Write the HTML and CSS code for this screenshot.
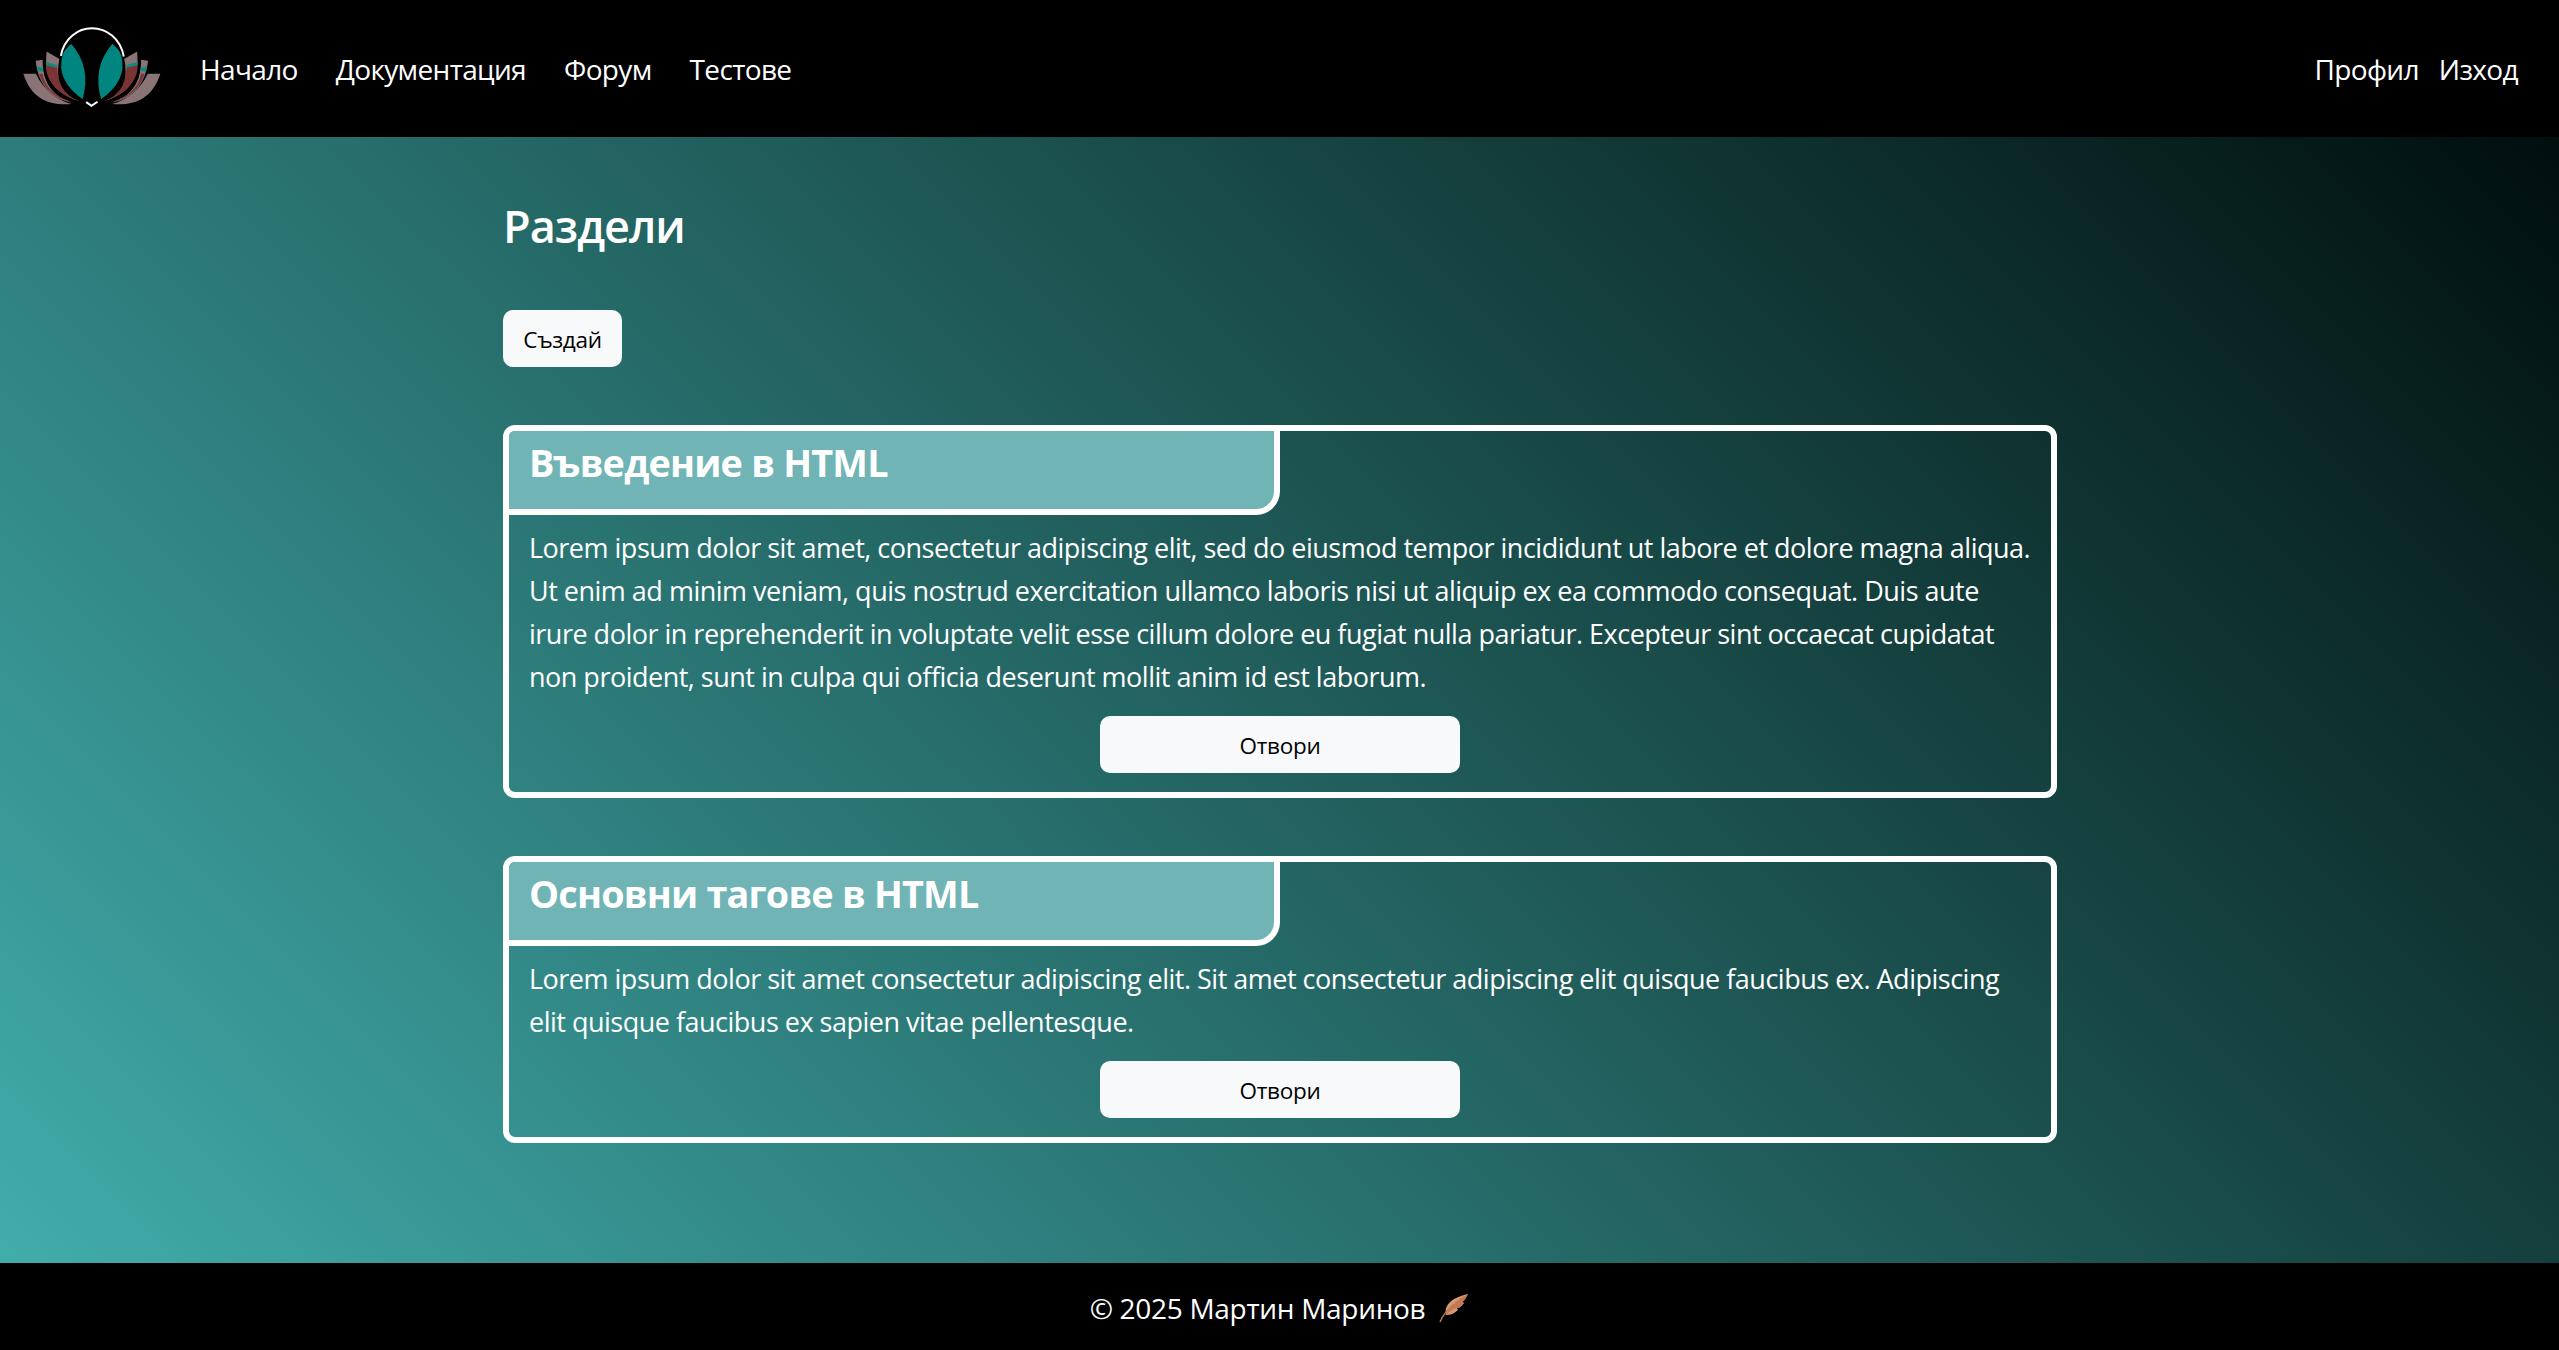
FILE: index.html
```html
<!DOCTYPE html>
<html lang="bg">
<head>
<meta charset="utf-8">
<title>Раздели</title>
<link rel="stylesheet" href="styles.css">
</head>
<body>
<nav class="navbar">
  <svg class="logo" viewBox="60 70 430 260" aria-hidden="true">
    <defs>
      <g id="half">
        <path class="petal-grey" d="M70 222 L108 222 C130 270 170 300 215 313 C150 318 95 300 70 222Z"/>
        <path class="petal-grey" d="M107 183 L128 180 C128 250 160 290 215 308 C160 300 115 260 107 183Z"/>
        <path class="petal-red" d="M128 222 C135 265 170 295 225 308 C165 300 128 262 118 222Z"/>
        <path class="petal-teal" d="M110 200 L130 204 L130 214 L113 214Z"/>
        <path class="petal-grey" d="M140 155 L180 178 C170 240 190 280 240 304 C170 285 130 240 140 155Z"/>
        <path class="petal-teal" d="M138 186 L172 196 L172 204 L138 196Z"/>
        <path class="petal-red" d="M138 196 L172 204 C172 245 195 280 240 304 C175 285 138 245 138 196Z"/>
        <path class="petal-line" d="M183 170 C165 240 185 285 250 306"/>
        <path class="petal-line" d="M133 190 C130 250 165 295 238 309"/>
        <path class="petal-red" d="M183 185 L197 210 L186 205Z"/>
        <path class="petal-red" d="M184 215 C205 240 225 265 240 292 C215 270 195 250 184 215Z"/>
        <path class="leaf" d="M215 128 C252 170 272 230 250 303 C205 272 168 225 185 165 C190 150 202 138 215 128Z"/>
      </g>
    </defs>
    <use href="#half"/>
    <use href="#half" transform="matrix(-1 0 0 1 552 0)"/>
    <path class="halo" d="M183 168 C192 115 235 85 276 85 C320 85 362 115 372 170"/>
    <path class="chevron" d="M259 307 L275 318 L293 306"/>
  </svg>
  <ul class="nav-links">
    <li>Начало</li>
    <li>Документация</li>
    <li>Форум</li>
    <li>Тестове</li>
  </ul>
  <ul class="nav-links nav-right">
    <li>Профил</li>
    <li>Изход</li>
  </ul>
</nav>
<main class="content">
  <div class="container">
    <h1 class="page-title">Раздели</h1>
    <button class="btn btn-create">Създай</button>
    <section class="card">
      <h2 class="card-tab">Въведение в HTML</h2>
      <div class="card-body">
        <p class="card-text">Lorem ipsum dolor sit amet, consectetur adipiscing elit, sed do eiusmod tempor incididunt ut labore et dolore magna aliqua. Ut enim ad minim veniam, quis nostrud exercitation ullamco laboris nisi ut aliquip ex ea commodo consequat. Duis aute irure dolor in reprehenderit in voluptate velit esse cillum dolore eu fugiat nulla pariatur. Excepteur sint occaecat cupidatat non proident, sunt in culpa qui officia deserunt mollit anim id est laborum.</p>
        <button class="btn btn-open">Отвори</button>
      </div>
    </section>
    <section class="card">
      <h2 class="card-tab">Основни тагове в HTML</h2>
      <div class="card-body">
        <p class="card-text">Lorem ipsum dolor sit amet consectetur adipiscing elit. Sit amet consectetur adipiscing elit quisque faucibus ex. Adipiscing elit quisque faucibus ex sapien vitae pellentesque.</p>
        <button class="btn btn-open">Отвори</button>
      </div>
    </section>
  </div>
</main>
<footer class="footer">
  <span>© 2025 Мартин Маринов</span>
  <svg class="feather" viewBox="0 0 30 30" aria-hidden="true">
    <path class="feather-vane" d="M7 22 C5 13 11 5 29 1 C27 5 25 8 23 9 L25 10 C22 14 20 15 18 15 L19 17 C16 20 12 22 7 22Z"/>
    <path class="feather-shade" d="M7 22 C10 14 16 8 29 1 C27 5 25 8 23 9 L25 10 C22 14 20 15 18 15 C14 16 10 19 7 22Z"/>
    <path class="feather-quill" d="M1 29 C3 24 6 19 14 12"/>
  </svg>
</footer>
</body>
</html>
```

FILE: styles.css
```css
* {
  box-sizing: border-box;
}

html,
body {
  margin: 0;
  height: 100%;
}

body {
  display: flex;
  flex-direction: column;
  min-height: 100vh;
  background: #000;
  color: #fff;
  font-family: "Open Sans", "Noto Sans", sans-serif;
}

.navbar {
  display: flex;
  align-items: center;
  height: 137px;
  flex: none;
  padding: 0 41px 0 20px;
  background: #000;
}

.logo {
  width: 143px;
  height: 87px;
  flex: none;
  margin-bottom: 5px;
}

.petal-grey { fill: #8a7475; }
.petal-red { fill: #7a3434; }
.petal-teal { fill: #0c8a84; }
.petal-line { fill: none; stroke: #000; stroke-width: 5; }
.leaf { fill: #008580; stroke: #000; stroke-width: 6; }
.halo { fill: none; stroke: #fff; stroke-width: 6; }
.chevron { fill: none; stroke: #fff; stroke-width: 6; }

.nav-links {
  display: flex;
  gap: 38px;
  margin: 0 0 0 37px;
  padding: 0;
  list-style: none;
  font-size: 28px;
  letter-spacing: -0.65px;
}

.nav-right {
  gap: 20px;
  margin-left: auto;
}

.content {
  flex: 1;
  background: linear-gradient(45deg, #41adab, #000f0d);
}

.container {
  display: flex;
  flex-direction: column;
  align-items: flex-start;
  width: 1555px;
  margin: 0 auto;
  padding: 54px 0 119px 1px;
}

.page-title {
  margin: 0 0 50px;
  font-size: 45px;
  line-height: 69px;
  font-weight: 600;
  letter-spacing: -1px;
}

.btn {
  height: 57px;
  padding-top: 3px;
  border: 0;
  border-radius: 10px;
  background: #f8f9fa;
  color: #000;
  font-family: inherit;
  font-size: 22.5px;
  letter-spacing: -0.3px;
}

.btn-create {
  width: 119px;
  margin-bottom: 58px;
}

.card {
  width: 100%;
  border: 6px solid #fff;
  border-radius: 12px;
  overflow: hidden;
}

.card + .card {
  margin-top: 58px;
}

.card-tab {
  width: 50%;
  height: 84px;
  margin: 0;
  padding: 7px 0 0 20px;
  background: #70b4b5;
  border-right: 6px solid #fff;
  border-bottom: 6px solid #fff;
  border-bottom-right-radius: 24px;
  font-size: 37.8px;
  line-height: 50px;
  font-weight: 700;
  letter-spacing: -0.8px;
}

.card-body {
  display: flex;
  flex-direction: column;
  align-items: center;
  padding: 10.5px 20px 19px;
}

.card-text {
  width: 100%;
  margin: 0 0 18px;
  font-size: 27px;
  line-height: 43.2px;
  letter-spacing: -0.5px;
}

.btn-open {
  width: 360px;
}

.footer {
  display: flex;
  align-items: center;
  justify-content: center;
  gap: 14px;
  flex: none;
  height: 87px;
  padding-top: 3px;
  font-size: 28px;
  letter-spacing: -0.3px;
}

.feather {
  width: 30px;
  height: 30px;
}

.feather-vane { fill: #d9976f; }
.feather-shade { fill: #c07a58; }
.feather-quill { fill: none; stroke: #b97a55; stroke-width: 1.5; }
```
